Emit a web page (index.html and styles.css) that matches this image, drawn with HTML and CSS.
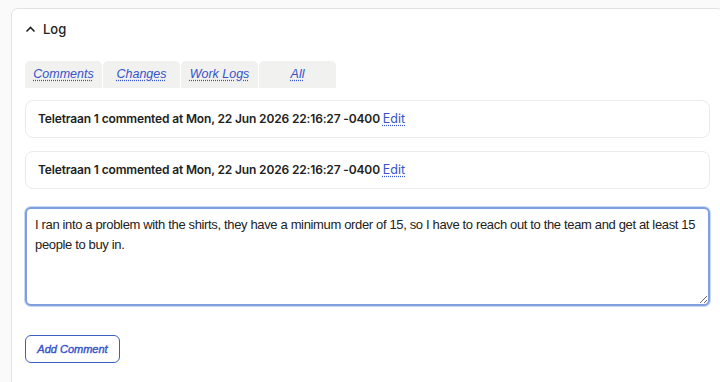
FILE: index.html
```html
<!DOCTYPE html>
<html lang="en">
<head>
    <meta charset="UTF-8">
    <meta name="viewport" content="width=device-width, initial-scale=1.0">
    <title>Log</title>
    <link rel="stylesheet" href="styles.css">
</head>
<body>

    <div class="panel">
        <div class="panel-header">
            <svg class="chevron" width="11" height="8" viewBox="0 0 11 8">
                <path d="M1.5 6.5 L5.5 2.5 L9.5 6.5" fill="none" stroke="#222" stroke-width="1.6"/>
            </svg>
            <span>Log</span>
        </div>

        <div class="tabs">
            <a class="tab" href="#">Comments</a>
            <a class="tab" href="#">Changes</a>
            <a class="tab" href="#">Work Logs</a>
            <a class="tab" href="#">All</a>
        </div>

        <div class="entry">
            Teletraan 1 commented at Mon, 22 Jun 2026 22:16:27 -0400 <a class="edit" href="#">Edit</a>
        </div>
        <div class="entry">
            Teletraan 1 commented at Mon, 22 Jun 2026 22:16:27 -0400 <a class="edit" href="#">Edit</a>
        </div>

        <textarea class="comment-box">I ran into a problem with the shirts, they have a minimum order of 15, so I have to reach out to the team and get at least 15 people to buy in.</textarea>

        <button class="add-btn">Add Comment</button>
    </div>

</body>
</html>
```

FILE: styles.css
```css
body {
    font-family: Inter, "Noto Sans", sans-serif;
    background-color: #fafafa;
    margin: 0;
    overflow: hidden;
    color: #222;
}
.panel {
    background-color: #fff;
    border: 1px solid #e2e2e2;
    border-radius: 7px;
    margin: 8px 0 0 11px;
    width: 685px;
    padding: 0 13px 20px 13px;
    display: flex;
    flex-direction: column;
    min-height: 360px;
}
.panel-header {
    display: flex;
    align-items: center;
    gap: 7px;
    height: 40px;
    font-size: 13px;
    font-weight: 500;
    color: #222;
}
.tabs {
    display: flex;
    gap: 1px;
    margin-top: 12px;
    width: 311px;
}
.tab {
    flex: 1;
    background-color: #f1f1f0;
    border-radius: 5px 5px 0 0;
    height: 27px;
    line-height: 27px;
    text-align: center;
    font-family: "Liberation Sans", Arial, sans-serif;
    font-style: italic;
    font-size: 12.5px;
    color: #3653c9;
    text-decoration: underline dotted;
    text-underline-offset: 2px;
}
.entry {
    border: 1px solid #ebebeb;
    border-radius: 8px;
    height: 36px;
    line-height: 36px;
    padding: 0 12px;
    font-size: 12px;
    font-weight: 600;
    letter-spacing: -0.15px;
    color: #222;
    margin-top: 12px;
}
.entry + .entry {
    margin-top: 13px;
}
.edit {
    font-weight: 400;
    font-size: 12.5px;
    letter-spacing: 0;
    color: #3653c9;
    text-decoration: underline dotted;
    text-underline-offset: 2px;
}
.comment-box {
    margin-top: 18px;
    height: 99px;
    box-sizing: border-box;
    border: 2px solid #7f9fde;
    border-radius: 6px;
    box-shadow: 0 0 0 1px #c9d8f4;
    padding: 6px 8px;
    font-family: "Liberation Sans", Arial, sans-serif;
    font-size: 13px;
    letter-spacing: -0.35px;
    line-height: 20px;
    color: #222;
    resize: vertical;
    outline: none;
}
.add-btn {
    align-self: flex-start;
    margin-top: 29px;
    width: 95px;
    height: 28px;
    padding: 0;
    white-space: nowrap;
    background-color: #fff;
    border: 1.5px solid #3d5ec6;
    border-radius: 6px;
    font-family: "Liberation Sans", Arial, sans-serif;
    font-style: italic;
    font-weight: 400;
    font-size: 11px;
    -webkit-text-stroke: 0.4px #3653c9;
    color: #3653c9;
    cursor: pointer;
}
```
